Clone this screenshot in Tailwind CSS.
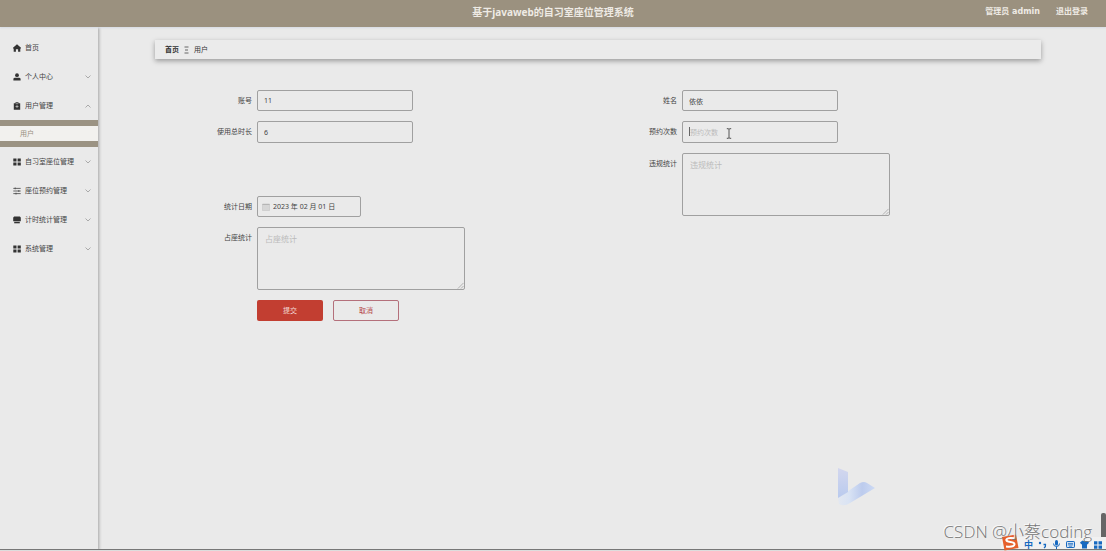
<!DOCTYPE html>
<html lang="zh-CN">
<head>
<meta charset="utf-8">
<title>基于javaweb的自习室座位管理系统</title>
<script src="https://cdn.jsdelivr.net/npm/@tailwindcss/browser@4"></script>
</head>
<body class="relative flex min-h-screen flex-col overflow-hidden bg-[#eaeaea] font-['Noto_Sans','Noto_Sans_CJK_SC',sans-serif] text-[7px] leading-[10px] text-[#444]">
<svg class="hidden">
  <symbol id="down" viewBox="0 0 8 8"><path d="M1.5 2.5 4 5l2.5-2.5" fill="none" stroke="#999" stroke-width=".8"/></symbol>
  <symbol id="grip" viewBox="0 0 8 8"><path d="M1 7.500 7.500 1M4.500 7.500l3-3" fill="none" stroke="#999" stroke-width=".8"/></symbol>
  <symbol id="grid" viewBox="0 0 8 8"><path d="M.3.5h3.2v3H.3zM4.6.5h3.2v3H4.6zM.3 4.6h3.2v3H.3zM4.6 4.6h3.2v3H4.6z" fill="#333"/></symbol>
</svg>

<header class="relative z-10 grid h-[27px] shrink-0 grid-cols-[1fr_auto_1fr] items-center bg-[#9b917f] pb-[3px] font-bold text-[#eeeae4] shadow-[0_1px_2px_#d5dae4]">
  <h1 class="col-start-2 text-[10px] leading-[14px]">基于javaweb的自习室座位管理系统</h1>
  <div class="flex justify-end gap-4 pr-[18px] font-['DejaVu_Sans','Noto_Sans_CJK_SC',sans-serif] text-[8px]">
    <span>管理员 admin</span>
    <a href="#">退出登录</a>
  </div>
</header>

<div class="flex grow">
  <nav class="w-[98px] shrink-0 pt-[6px] shadow-[1px_0_3px_rgba(0,0,0,0.3)]">
    <a href="#" class="flex h-[29px] items-center gap-1 pl-[13px] pr-[6px]">
      <svg class="size-2" viewBox="0 0 8 8"><path d="M4 .2 0 3.8v.6h.7v3.4h2.2V5.2h2.2v2.6h2.2V4.4H8v-.6z" fill="#333"/></svg>首页
    </a>
    <a href="#" class="flex h-[29px] items-center gap-1 pl-[13px] pr-[6px]">
      <svg class="size-2" viewBox="0 0 8 8"><circle cx="4" cy="2.2" r="1.9" fill="#333"/><path d="M.4 7.6V6Q.4 4.7 2 4.7h4Q7.6 4.7 7.6 6v1.6z" fill="#333"/></svg>个人中心
      <svg class="ml-auto size-2"><use href="#down"/></svg>
    </a>
    <a href="#" class="flex h-[29px] items-center gap-1 pl-[13px] pr-[6px]">
      <svg class="size-2" viewBox="0 0 8 8"><path d="M.8 1.2h1.7V.3h3v.9h1.7v6.6H.8z" fill="#333"/><path d="M2.8 1.7h2.4M4 3v3M2.5 4.5h3" stroke="#ddd" stroke-width=".6"/></svg>用户管理
      <svg class="ml-auto size-2 rotate-180"><use href="#down"/></svg>
    </a>
    <a href="#" class="flex h-[27px] items-center border-y-[6px] border-[#9b9383] bg-[#f2f1ee] pl-[20px] text-[#999080]">用户</a>
    <a href="#" class="flex h-[29px] items-center gap-1 pl-[13px] pr-[6px]">
      <svg class="size-2"><use href="#grid"/></svg>自习室座位管理
      <svg class="ml-auto size-2"><use href="#down"/></svg>
    </a>
    <a href="#" class="flex h-[29px] items-center gap-1 pl-[13px] pr-[6px]">
      <svg class="size-2" viewBox="0 0 8 8"><path d="M.3 1.4h7.4M.3 4h7.4M.3 6.6h7.4M2.2.5v1.8M5.8 3.1v1.8M3 5.7v1.8" stroke="#444" stroke-width=".8"/></svg>座位预约管理
      <svg class="ml-auto size-2"><use href="#down"/></svg>
    </a>
    <a href="#" class="flex h-[29px] items-center gap-1 pl-[13px] pr-[6px]">
      <svg class="size-2" viewBox="0 0 8 8"><path d="M1.2.5h5.6l1 1v3.8H.2V1.500z" fill="#333"/><path d="M1.2 5.800h5.600v1.500H1.200z" fill="#333"/></svg>计时统计管理
      <svg class="ml-auto size-2"><use href="#down"/></svg>
    </a>
    <a href="#" class="flex h-[29px] items-center gap-1 pl-[13px] pr-[6px]">
      <svg class="size-2"><use href="#grid"/></svg>系统管理
      <svg class="ml-auto size-2"><use href="#down"/></svg>
    </a>
  </nav>

  <main class="min-w-0 grow pl-[57px] pt-[13px]">
    <div class="mr-[65px] flex h-[19px] items-center gap-[5px] bg-[#ebebeb] pl-[10px] text-[#333] shadow-[0_2px_5px_rgba(0,0,0,0.35)]">
      <a href="#" class="font-bold">首页</a>
      <svg class="h-2 w-[5px]" viewBox="0 0 5 8"><path d="M.5 1h4M1 4h3M.5 7h4" stroke="#444" stroke-width=".8"/></svg>
      <span>用户</span>
    </div>

    <form class="mr-[101px] mt-[31px] grid grid-cols-2">
      <div class="flex flex-col gap-[10px]">
        <div class="flex items-center gap-[5px]">
          <label for="account" class="w-[97px] text-right">账号</label>
          <input id="account" value="11" class="h-[21px] w-[156px] rounded-xs border border-[#a0a0a0] px-[6px]">
        </div>
        <div class="flex items-center gap-[5px]">
          <label for="duration" class="w-[97px] text-right">使用总时长</label>
          <input id="duration" value="6" class="h-[22px] w-[156px] rounded-xs border border-[#a0a0a0] px-[6px]">
        </div>
        <div class="mt-[43px] flex items-center gap-[5px]">
          <label for="date" class="w-[97px] text-right">统计日期</label>
          <div class="flex h-[21px] w-[104px] items-center gap-[3px] rounded-xs border border-[#a0a0a0] pl-[4px]">
            <svg class="size-2 shrink-0" viewBox="0 0 8 8"><path d="M.5 1h7v6.500h-7z" fill="#d6d6d6" stroke="#c4c4c4" stroke-width=".6"/><path d="M.5 1.500h7" stroke="#b5b5b5"/></svg>
            <input id="date" value="2023 年 02 月 01 日" class="w-full min-w-0">
          </div>
        </div>
        <div class="flex items-start gap-[5px]">
          <label for="seat" class="w-[97px] pt-[6px] text-right">占座统计</label>
          <div class="relative">
            <textarea id="seat" placeholder="占座统计" class="block h-[63px] w-[208px] resize-none rounded-xs border border-[#a0a0a0] px-[7px] py-[6px] text-[8px] placeholder:text-[#bbb]"></textarea>
            <svg class="absolute bottom-px right-px size-[7px]"><use href="#grip"/></svg>
          </div>
        </div>
        <div class="flex gap-[10px] pl-[102px]">
          <button type="submit" class="h-[21px] w-[66px] rounded-xs bg-[#c23e31] text-[#f3dcd8]">提交</button>
          <button type="button" class="h-[21px] w-[66px] rounded-xs border border-[#b4707b] text-[#b5474a]">取消</button>
        </div>
      </div>

      <div class="flex flex-col gap-[10px]">
        <div class="flex items-center gap-[5px]">
          <label for="name" class="w-[97px] text-right">姓名</label>
          <input id="name" value="依依" class="h-[21px] w-[156px] rounded-xs border border-[#a0a0a0] px-[6px]">
        </div>
        <div class="relative flex items-center gap-[5px]">
          <label for="times" class="w-[97px] text-right">预约次数</label>
          <input id="times" placeholder="预约次数" class="h-[22px] w-[156px] rounded-xs border border-[#a0a0a0] px-[7px] placeholder:text-[#bbb]">
          <span class="absolute left-[109px] top-[6px] h-[9px] w-px bg-[#666]"></span>
          <svg class="absolute left-[146px] top-[7px] h-[11px] w-[6px]" viewBox="0 0 6 11"><path d="M.8.7h1.700L3 1.200 3.500.700h1.700M.8 10.300h1.700l.5-.5.5.5h1.700M3 1v9" fill="none" stroke="#444" stroke-width=".9"/></svg>
        </div>
        <div class="flex items-start gap-[5px]">
          <label for="violation" class="w-[97px] pt-[6px] text-right">违规统计</label>
          <div class="relative">
            <textarea id="violation" placeholder="违规统计" class="block h-[63px] w-[208px] resize-none rounded-xs border border-[#a0a0a0] px-[7px] py-[6px] text-[8px] placeholder:text-[#bbb]"></textarea>
            <svg class="absolute bottom-px right-px size-[7px]"><use href="#grip"/></svg>
          </div>
        </div>
      </div>
    </form>
  </main>
</div>

<svg class="absolute bottom-[44px] right-[226px] h-[40px] w-[43px]" viewBox="0 0 43 40">
  <defs><linearGradient id="wing" x2="1"><stop stop-color="#e3e8f1"/><stop offset=".3" stop-color="#d9e3f4"/><stop offset=".65" stop-color="#bccbed"/><stop offset="1" stop-color="#cddaf4"/></linearGradient>
  <linearGradient id="stem" x2="0" y2="1"><stop stop-color="#d3d7ee"/><stop offset="1" stop-color="#b9caee"/></linearGradient></defs>
  <path d="m1 31 22-15q4-2 7 0l8 5-25 15q-6 4-11 1z" fill="url(#wing)"/>
  <path d="M1 1 11 5v20L1 31z" fill="url(#stem)"/>
</svg>

<div class="absolute bottom-[6px] right-0 h-[32px] w-[5px] rounded-t-xs bg-[#666]"></div>
<div class="absolute bottom-0 left-0 h-[2px] w-full border-t border-[#777] bg-[#ddd]"></div>

<div class="absolute bottom-[2px] right-0 flex h-[12px] items-center gap-[5px] bg-[#f1f1f1] pr-[4px] pt-[3px] text-[#1769c0]">
  <svg class="-mb-1 -mt-2 h-[17px] w-[18px]" viewBox="0 0 18 17"><path d="m1 3 14-2.500L17.500 14 3.500 16.500z" fill="#e65f2b"/><path d="M13.300 4.200Q6 3.200 5.300 5.700 5.200 7.500 9.500 7.900q4.300.500 4 2.700-.7 2.900-8.500 2" fill="none" stroke="#fff" stroke-width="2"/></svg>
  <span class="text-[9px] font-bold">中</span>
  <svg class="size-[9px]" viewBox="0 0 9 9"><circle cx="2" cy="3" r="1.200" fill="#1769c0"/><path d="M5.500 4.500h2q.5 2-1.500 3.500" fill="none" stroke="#1769c0" stroke-width="1.300"/></svg>
  <svg class="size-[9px]" viewBox="0 0 9 9"><rect x="3" width="3" height="5.500" rx="1.500" fill="#1769c0"/><path d="M1.500 3.500q0 3 3 3t3-3M4.500 6.500V9" fill="none" stroke="#1769c0"/></svg>
  <svg class="size-[9px]" viewBox="0 0 9 9"><rect x=".5" y="1.500" width="8" height="6" rx=".7" fill="#cfe0f2" stroke="#1769c0"/><path d="M2 3.500h5M2 4.800h5M3 6.200h3" stroke="#1769c0" stroke-width=".7"/></svg>
  <svg class="size-[9px]" viewBox="0 0 9 9"><path d="M2.500.5q2 1.600 4 0L9 2.500 7.700 4.400 7 4v4.500H2V4l-.7.400L0 2.500z" fill="#1769c0"/></svg>
  <svg class="size-[8px]" viewBox="0 0 8 8"><path d="M0 .3h3.400v3.200H0zM4.500.3H8v3.200H4.500zM0 4.500h3.400v3.200H0zM4.500 4.500H8v3.200H4.500z" fill="#1769c0"/></svg>
</div>

<div class="absolute bottom-[8px] right-[14px] font-['Open_Sans','Noto_Sans_CJK_SC',sans-serif] text-[17px] font-light leading-[22px] text-[#777] [text-shadow:-1px_-1px_0_#fafafa]">CSDN @小蔡coding</div>
</body>
</html>
